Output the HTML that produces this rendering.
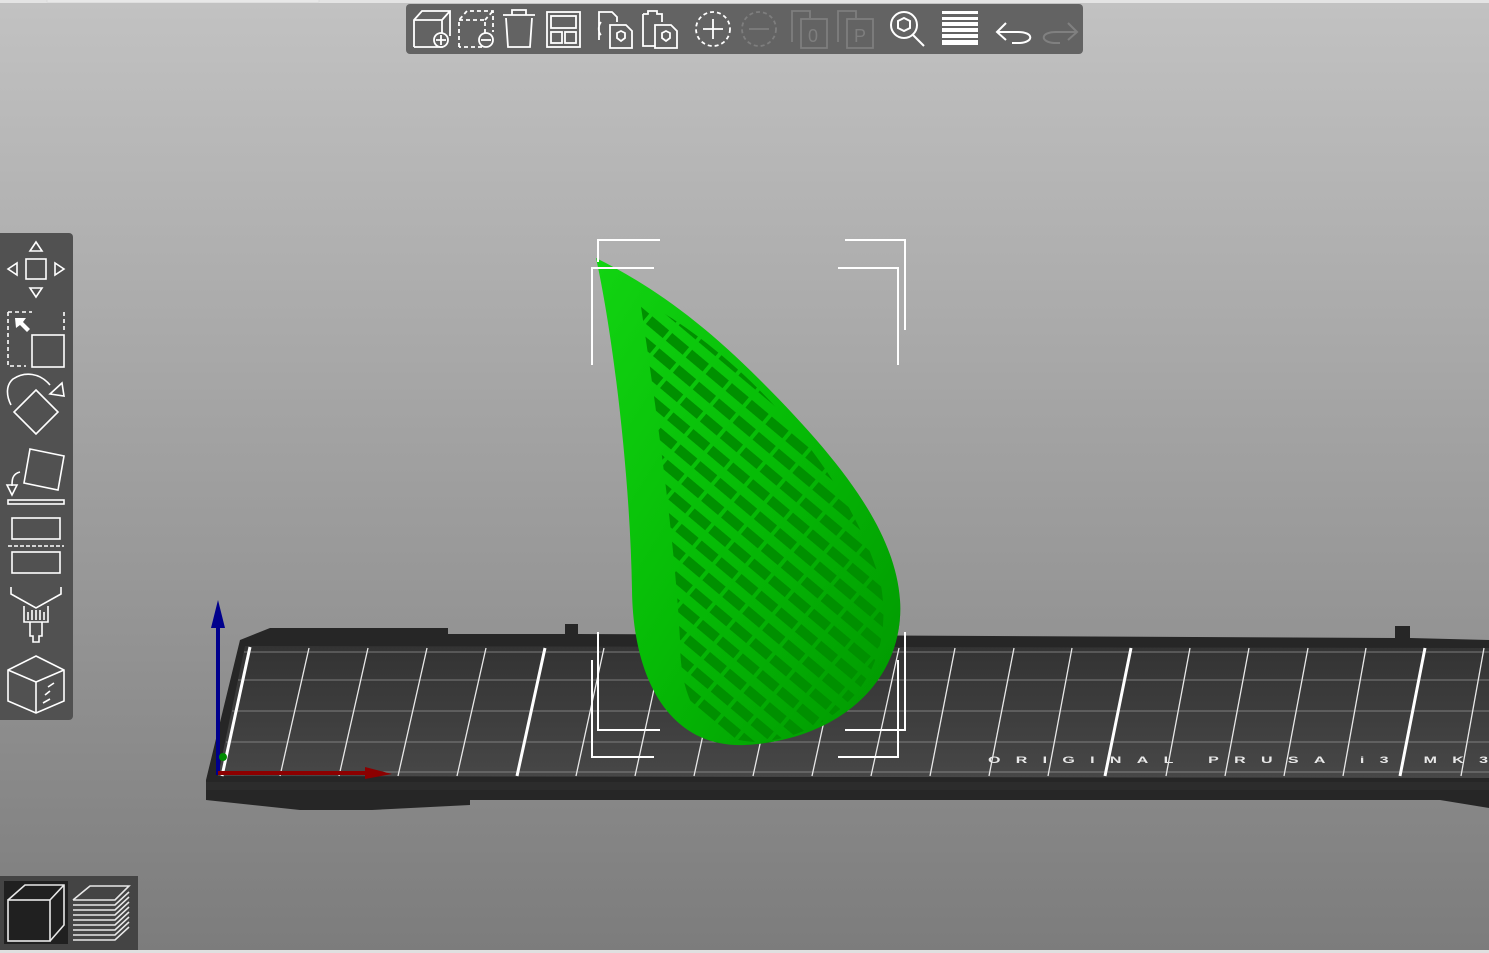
<!DOCTYPE html>
<html><head><meta charset="utf-8"><style>
html,body{margin:0;padding:0;width:1489px;height:953px;overflow:hidden;background:#a0a0a0}
svg{display:block}
</style></head><body>
<svg width="1489" height="953" viewBox="0 0 1489 953" xmlns="http://www.w3.org/2000/svg">
<defs>
<linearGradient id="bg" x1="0" y1="0" x2="0" y2="1">
<stop offset="0" stop-color="#c2c2c2"/><stop offset="1" stop-color="#7c7c7c"/>
</linearGradient>
<linearGradient id="bed" x1="0" y1="0" x2="0" y2="1">
<stop offset="0" stop-color="#333"/><stop offset="1" stop-color="#474747"/>
</linearGradient>
<linearGradient id="drop" x1="0" y1="0" x2="1" y2="1">
<stop offset="0" stop-color="#12d412"/><stop offset="0.5" stop-color="#06bb06"/><stop offset="1" stop-color="#009600"/>
</linearGradient>
<pattern id="slots" width="26" height="20" patternUnits="userSpaceOnUse" patternTransform="rotate(40)">
<rect x="1" y="3" width="22" height="10" fill="#009000"/>
</pattern>
<clipPath id="dc"><path d="M596,258 C650,285 700,320 760,380 C840,460 895,530 900,600 C905,680 840,740 745,745 C670,748 633,680 632,590 C630,470 612,330 596,258 Z"/></clipPath>
</defs>
<rect width="1489" height="953" fill="url(#bg)"/>
<rect x="0" y="0" width="1489" height="3" fill="#e4e4e4"/>
<rect x="47" y="0" width="272" height="2" fill="#f0f0f0" stroke="#d0d0d0" stroke-width="0.5"/>
<rect x="0" y="950" width="1489" height="3" fill="#e0e0e0"/>

<polygon points="270,628 448,628 448,634 565,634 565,624 578,624 578,634 1395,638 1395,626 1410,626 1410,638 1489,640 1489,808 1440,800 470,800 470,805 372,810 300,810 206,800 206,780 240,640" fill="#262626"/>
<polygon points="245,646 1489,648 1489,778 218,776" fill="url(#bed)"/>
<polygon points="206,782 1489,782 1489,790 206,790" fill="#2c2c2c"/>
<g stroke="#9a9a9a" stroke-width="1" opacity="0.7">
<line x1="244" y1="652" x2="1489" y2="652"/>
<line x1="238" y1="680" x2="1489" y2="680"/>
<line x1="232" y1="711" x2="1489" y2="711"/>
<line x1="226" y1="742" x2="1489" y2="742"/>
<line x1="220" y1="772" x2="1489" y2="772"/>
</g>
<g stroke="#e8e8e8" stroke-width="1.3">
<line x1="309" y1="648" x2="280" y2="776"/>
<line x1="368" y1="648" x2="339" y2="776"/>
<line x1="427" y1="648" x2="398" y2="776"/>
<line x1="486" y1="648" x2="457" y2="776"/>
<line x1="604" y1="648" x2="576" y2="776"/>
<line x1="663" y1="648" x2="635" y2="776"/>
<line x1="722" y1="648" x2="694" y2="776"/>
<line x1="781" y1="648" x2="753" y2="776"/>
<line x1="840" y1="648" x2="812" y2="776"/>
<line x1="899" y1="648" x2="871" y2="776"/>
<line x1="955" y1="648" x2="930" y2="776"/>
<line x1="1014" y1="648" x2="989" y2="776"/>
<line x1="1072" y1="648" x2="1048" y2="776"/>
<line x1="1190" y1="648" x2="1166" y2="776"/>
<line x1="1249" y1="648" x2="1225" y2="776"/>
<line x1="1308" y1="648" x2="1284" y2="776"/>
<line x1="1366" y1="648" x2="1343" y2="776"/>
<line x1="1484" y1="648" x2="1461" y2="776"/>
</g>
<g stroke="#fff" stroke-width="3">
<line x1="250" y1="647" x2="222" y2="776"/>
<line x1="545" y1="648" x2="517" y2="776"/>
<line x1="1131" y1="648" x2="1105" y2="776"/>
<line x1="1425" y1="648" x2="1400" y2="776"/>
</g>
<text x="988" y="763" font-family="Liberation Sans, sans-serif" font-size="12" font-weight="bold" fill="#e8e8e8" textLength="500" lengthAdjust="spacingAndGlyphs" transform="translate(0,-300) scale(1,1.4) translate(0,-4)" style="display:none">ORIGINAL PRUSA i3 MK3</text>
<g transform="translate(988,763) scale(1,0.55)"><text x="0" y="0" font-family="Liberation Sans, sans-serif" font-size="16" font-weight="bold" fill="#e8e8e8" textLength="500" lengthAdjust="spacing">ORIGINAL  PRUSA  i3  MK3</text></g>

<line x1="218" y1="620" x2="218" y2="775" stroke="#00008c" stroke-width="4"/>
<polygon points="218,600 211,628 225,628" fill="#00008c"/>
<line x1="218" y1="773" x2="370" y2="773" stroke="#8c0000" stroke-width="4"/>
<polygon points="392,774 365,767 365,779" fill="#8c0000"/>
<circle cx="223" cy="757" r="4" fill="#008c00"/>

<path d="M596,258 C650,285 700,320 760,380 C840,460 895,530 900,600 C905,680 840,740 745,745 C670,748 633,680 632,590 C630,470 612,330 596,258 Z" fill="url(#drop)"/>
<g clip-path="url(#dc)">
<path d="M640,300 C720,340 840,450 880,580 C900,680 830,735 760,742 C700,742 680,700 680,640 C675,540 655,400 640,300 Z" fill="url(#slots)"/>
<path d="M745,745 C840,740 912,680 900,590 C905,690 850,748 745,750 Z" fill="#008a00"/>
</g>

<g stroke="#fff" stroke-width="2" fill="none">
<polyline points="660,240 598,240 598,262"/>
<polyline points="654,268 592,268 592,365"/>
<polyline points="845,240 905,240 905,330"/>
<polyline points="838,268 898,268 898,365"/>
<polyline points="598,632 598,730 660,730"/>
<polyline points="592,660 592,757 654,757"/>
<polyline points="905,632 905,730 845,730"/>
<polyline points="898,660 898,757 838,757"/>
</g>

<rect x="406" y="4" width="677" height="50" rx="4" fill="#636363"/>
<g stroke="#fff" stroke-width="1.8" fill="none">
<path d="M414,47 V20 L422,11 H450 V36 M414,20 H442 V47 H414 M442,20 L450,11"/>
<circle cx="441" cy="40" r="7" fill="#636363"/><path d="M436,40 H446 M441,35 V45"/>
<path d="M459,47 V20 L467,11 H493 V32 M459,20 H485 V47 H459 M485,20 L493,11" stroke-dasharray="4,3"/>
<circle cx="486" cy="40" r="7" fill="#636363"/><path d="M481,40 H491"/>
<path d="M503,15 H535 M512,15 V10 H526 V15 M506,18 L508,47 H530 L532,18"/>
<rect x="547" y="12" width="33" height="35"/><rect x="551" y="16" width="25" height="12"/><rect x="551" y="32" width="11" height="11"/><rect x="565" y="32" width="11" height="11"/>
<path d="M599,40 V12 H612 L617,17 V22 M601,22 C598,26 598,32 601,35"/>
<path d="M610,25 H626 L632,31 V48 H610 Z"/><path d="M621,31 L625,33 V38 L621,41 L617,38 V33 Z"/>
<path d="M643,14 H648 V11 H657 V14 H662 V22 M643,14 V46 H655"/><path d="M655,25 H671 L677,31 V48 H655 Z"/><path d="M666,31 L670,33 V38 L666,41 L662,38 V33 Z"/>
<circle cx="713" cy="29" r="17" stroke-dasharray="4,3"/><path d="M703,29 H723 M713,19 V39"/>
</g>
<g stroke="#7e7e7e" stroke-width="1.8" fill="none">
<circle cx="759" cy="29" r="17" stroke-dasharray="4,3"/><path d="M749,29 H769"/>
<path d="M792,42 V11 H810 V18"/><rect x="801" y="19" width="26" height="29"/>
<path d="M838,42 V11 H856 V18"/><rect x="847" y="19" width="26" height="29"/>
</g>
<g fill="#7e7e7e" font-family="Liberation Sans, sans-serif" font-size="18"><text x="808" y="42">0</text><text x="854" y="42">P</text></g>
<g stroke="#fff" stroke-width="2" fill="none">
<circle cx="904" cy="25" r="13"/><path d="M912,34 L924,46"/><path d="M904,18 L910,21 V28 L904,31 L898,28 V21 Z"/>
<path d="M1018,32 C1034,32 1034,42 1020,43 H1012"/><path d="M1018,32 H998 M1006,23 L997,32 L1006,40"/>
</g>
<g fill="#fff"><rect x="942" y="11" width="36" height="3"/><rect x="942" y="17" width="36" height="3"/><rect x="942" y="22" width="36" height="4"/><rect x="942" y="28" width="36" height="4"/><rect x="942" y="34" width="36" height="4"/><rect x="942" y="40" width="36" height="5"/></g>
<g stroke="#808080" stroke-width="2" fill="none">
<path d="M1056,32 C1040,32 1040,42 1054,43 H1060"/><path d="M1056,32 H1076 M1068,23 L1077,32 L1068,40"/>
</g>

<rect x="-5" y="233" width="78" height="487" rx="4" fill="#515151"/>
<g stroke="#fff" stroke-width="1.6" fill="none">
<rect x="26" y="259" width="20" height="20"/>
<polygon points="36,242 30,251 42,251"/><polygon points="36,297 30,288 42,288"/><polygon points="8,269 17,263 17,275"/><polygon points="64,269 55,263 55,275"/>
<path d="M8,312 H32 M8,312 V366 H26 M64,312 V330" stroke-dasharray="4,3"/>
<rect x="32" y="335" width="32" height="32"/>
<path d="M11,405 C6,395 6,385 13,379 C25,371 40,373 50,385"/>
<polygon points="62,383 50,394 64,396"/>
<polygon points="36,390 58,412 36,434 14,412"/>
<polygon points="30,449 64,456 58,490 24,483"/>
<path d="M20,472 C12,474 12,480 12,486"/><polygon points="12,495 7,485 17,485"/>
<rect x="8" y="500" width="56" height="4"/>
<rect x="12" y="518" width="48" height="21"/>
<path d="M8,546 H64" stroke-dasharray="4,2"/>
<rect x="12" y="552" width="48" height="21"/>
<path d="M11,587 V594 L36,608 L61,594 V587"/>
<path d="M24,606 V622 H48 V606 M28,612 V620 M32,610 V620 M36,610 V620 M40,610 V620 M44,612 V620 M30,622 V636 H33 V642 H39 V636 H42 V622"/>
<polygon points="36,656 64,670 64,701 36,713 8,701 8,670"/><path d="M8,670 L36,682 L64,670 M36,682 V713 M45,695 L50,691 M43,703 L50,699 M48,687 L54,683"/>
</g>
<polygon points="15,318 26,318 23,322 30,329 27,332 20,325 16,328" fill="#fff"/>

<rect x="0" y="876" width="138" height="74" fill="#444"/>
<rect x="4" y="881" width="64" height="63" fill="#202020"/>
<g stroke="#e8e8e8" stroke-width="1.6" fill="none">
<rect x="8" y="900" width="42" height="41"/><path d="M8,900 L25,885 H64 V925 L50,941 M50,900 L64,885"/>
<path d="M73,900 L90,886 H129 L115,900 H73"/>
<path d="M73,905 H115 L129,892 M73,910 H115 L129,897 M73,915 H115 L129,902 M73,920 H115 L129,907 M73,925 H115 L129,912 M73,930 H115 L129,917 M73,935 H115 L129,922 M73,940 H115 L129,927"/>
</g>
</svg>
</body></html>
